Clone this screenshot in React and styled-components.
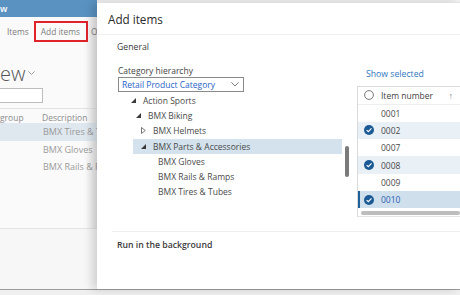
import React from "react";
import styled, { createGlobalStyle } from "styled-components";

const Global = createGlobalStyle`
  html, body { margin: 0; padding: 0; }
  body {
    width: 460px; height: 295px; overflow: hidden;
    background: #efefef;
    font-family: "Open Sans", "Noto Sans", sans-serif;
  }
  #root { width: 460px; height: 295px; }
`;

const Screen = styled.div`
  width: 460px; height: 295px;
  display: flex; flex-direction: column;
  background: #efefef;
`;

const Main = styled.div`
  height: 289px;
  display: grid;
  grid-template-columns: 97px 1fr;
  border-bottom: 1px solid #9c9c9c;
  background: #f4f4f4;
`;

/* ---------- back page ---------- */
const BackPage = styled.div`
  display: flex; flex-direction: column;
  background: linear-gradient(to right, #fafafa 0%, #fafafa 88%, #e9e9e9 100%);
  overflow: hidden;
  color: #8a8a8a;
`;

const TopBar = styled.div`
  height: 17px;
  background: #5a93c2;
  color: #fff;
  font-size: 9px; font-weight: 600;
  display: flex; align-items: center;
`;

const Tabs = styled.div`
  height: 28px;
  display: flex; align-items: center;
  font-size: 8.4px;
  color: #7d7d7d;
  white-space: nowrap;
`;

const Tab = styled.span`
  display: inline-flex; align-items: center;
  height: 21px;
  margin-left: ${p => p.$ml}px;
  padding: 0 ${p => (p.$boxed ? "6px 0 5px" : "0")};
  box-sizing: border-box;
  border: ${p => (p.$boxed ? "2px solid #e0232b" : "none")};
`;

const PageTitle = styled.div`
  margin-top: 17px;
  height: 22px;
  display: flex; align-items: center; gap: 3px;
  font-size: 20px; font-weight: 300;
  color: #555;
  white-space: nowrap;
`;

const FilterBox = styled.div`
  margin-top: 4px;
  margin-left: -2px;
  width: 45px; height: 15px;
  box-sizing: border-box;
  border: 1px solid #bdbdbd;
  background: #fff;
`;

const BackHeader = styled.div`
  margin-top: 5px;
  border-top: 1px solid #e3e3e3;
  height: 14px;
  display: grid; grid-template-columns: 42px 1fr;
  align-items: end;
  font-size: 8.5px;
  color: #8c8c8c;
  white-space: nowrap;
`;

const BackRow = styled.div`
  height: 17.5px;
  display: grid; grid-template-columns: 43px 1fr;
  align-items: center;
  font-size: 9px;
  color: #9a9a9a;
  white-space: nowrap;
  background: ${p => (p.$sel ? "#dfe7ef" : "transparent")};
`;

const BackFooter = styled.div`
  margin-top: auto;
  height: 60px;
  border-top: 1px solid #e4e4e4;
  background: #f7f7f7;
`;

/* ---------- dialog ---------- */
const DialogWrap = styled.div`
  padding-top: 2px;
  display: flex;
  background: #f2f2f2;
`;

const Dialog = styled.div`
  flex: 1;
  background: #fff;
  border-top: 1px solid #e1e1e1;
  box-shadow: -5px 0 9px rgba(0, 0, 0, 0.16);
  display: flex; flex-direction: column;
  overflow: hidden;
  color: #333;
`;

const DialogHeader = styled.div`
  height: 31px;
  border-bottom: 1px solid #f0f0f0;
  display: flex; align-items: center;
  padding-left: 11px;
  font-size: 11.7px;
  color: #2b2b2b;
`;

const Section = styled.div`
  padding-left: 20px;
  padding-top: ${p => p.$pt}px;
  height: 12px;
  line-height: 12px;
  font-size: 8.7px;
  font-weight: ${p => p.$w || 400};
  color: ${p => p.$c || "#333"};
  white-space: nowrap;
`;

const Body = styled.div`
  display: flex;
  padding-top: 13px;
  height: 153px;
`;

const LeftCol = styled.div`
  width: 260px;
  padding-left: 21px;
  box-sizing: border-box;
  display: flex; flex-direction: column;
`;

const Label = styled.div`
  font-size: 8.5px;
  color: #444;
  height: 10px;
  line-height: 10px;
  margin-bottom: 1px;
  white-space: nowrap;
`;

const Select = styled.div`
  width: 126px; height: 15px;
  box-sizing: border-box;
  border: 1px solid #8a8a8a;
  display: flex; align-items: center; justify-content: space-between;
  padding: 0 4px 0 3px;
  font-size: 8.5px;
  color: #2763c7;
  white-space: nowrap;
`;

const TreeArea = styled.div`
  margin-top: 1px;
  margin-left: 10px;
  display: flex;
  gap: 3px;
`;

const TreeRows = styled.div`
  width: 214px;
  display: flex; flex-direction: column;
`;

const TreeRow = styled.div`
  height: 15.2px;
  display: flex; align-items: center;
  padding-left: ${p => 3 + p.$level * 5 - (p.$sel ? 5 : 0)}px;
  margin-left: ${p => (p.$sel ? 5 : 0)}px;
  background: ${p => (p.$sel ? "#d3e2ec" : "transparent")};
  font-size: 8.5px;
  color: #4a4a4a;
  white-space: nowrap;
`;

const Twisty = styled.span`
  width: 12px;
  flex: none;
  display: inline-flex; align-items: center;
`;

const ScrollTrack = styled.div`
  width: 4px;
  display: flex; flex-direction: column;
`;

const ScrollThumb = styled.div`
  margin-top: 53px;
  height: 31px;
  border-radius: 2px;
  background: #7a7a7a;
`;

const RightCol = styled.div`
  flex: 1;
  display: flex; flex-direction: column;
`;

const LinkBtn = styled.div`
  padding-left: 9px;
  height: 12px;
  line-height: 12px;
  margin-top: 2px;
  font-size: 8.7px;
  color: #3176bd;
  white-space: nowrap;
`;

const Grid = styled.div`
  margin-top: 6px;
  border-left: 1px solid #dadada;
  border-top: 1px solid #dadada;
  border-bottom: 1px solid #e4e4e4;
  display: flex; flex-direction: column;
  height: 131px;
  box-sizing: border-box;
`;

const GridHead = styled.div`
  height: 16.5px;
  flex: none;
  display: flex; align-items: center;
  border-bottom: 1px solid #eeeeee;
  font-size: 8.5px;
  color: #444;
  white-space: nowrap;
  padding-left: 6px;
`;

const GridRow = styled.div`
  height: 17.3px;
  flex: none;
  display: flex; align-items: center;
  box-sizing: border-box;
  padding-left: ${p => (p.$current ? 4 : 6)}px;
  border-left: ${p => (p.$current ? "2px solid #1f5f9a" : "none")};
  background: ${p => (p.$current ? "#cfdfeb" : p.$sel ? "#e9f0f6" : "#fff")};
  font-size: 8.5px;
  color: ${p => (p.$current ? "#2a5eb3" : "#4a4a4a")};
  white-space: nowrap;
`;

const CheckCell = styled.span`
  width: 17px; flex: none;
  display: inline-flex; align-items: center;
`;

const HScroll = styled.div`
  margin: 3px 0 0 3px;
  height: 4px;
  flex: none;
  border-radius: 2px;
  background: #bdbdbd;
`;

const SortArrow = styled.span`
  margin-left: auto;
  margin-right: 7px;
  color: #8a8a8a;
  font-size: 9px;
  font-weight: 300;
`;

const Divider = styled.div`
  margin-left: 15px;
  margin-top: 12px;
  border-top: 1px solid #efefef;
`;

/* ---------- icons ---------- */
const Chevron = ({ color = "#555", size = 8 }) => (
  <svg width={size} height={size * 0.6} viewBox="0 0 10 6">
    <path d="M0.5 0.5 L5 5 L9.5 0.5" fill="none" stroke={color} strokeWidth="1" />
  </svg>
);

const Expanded = () => (
  <svg width="5" height="5" viewBox="0 0 5 5">
    <path d="M5 0 L5 5 L0 5 Z" fill="#3a3a3a" />
  </svg>
);

const Collapsed = () => (
  <svg width="5" height="7" viewBox="0 0 5 7">
    <path d="M0.5 0.5 L4.3 3.5 L0.5 6.5 Z" fill="none" stroke="#555" strokeWidth="0.8" />
  </svg>
);

const Checked = () => (
  <svg width="10" height="10" viewBox="0 0 10 10">
    <circle cx="5" cy="5" r="5" fill="#1b5a95" />
    <path d="M2.6 5.1 L4.3 6.7 L7.5 3.4" fill="none" stroke="#fff" strokeWidth="1.1" />
  </svg>
);

const Radio = () => (
  <svg width="10" height="10" viewBox="0 0 10 10">
    <circle cx="5" cy="5" r="4.4" fill="#fff" stroke="#6a6a6a" strokeWidth="0.9" />
  </svg>
);

const tree = [
  { label: "Action Sports", level: 0, icon: "exp" },
  { label: "BMX Biking", level: 1, icon: "exp" },
  { label: "BMX Helmets", level: 2, icon: "col" },
  { label: "BMX Parts & Accessories", level: 2, icon: "exp", sel: true },
  { label: "BMX Gloves", level: 3 },
  { label: "BMX Rails & Ramps", level: 3 },
  { label: "BMX Tires & Tubes", level: 3 },
];

const items = [
  { n: "0001" },
  { n: "0002", sel: true },
  { n: "0007" },
  { n: "0008", sel: true },
  { n: "0009" },
  { n: "0010", sel: true, current: true },
];

export default function App() {
  return (
    <Screen>
      <Global />
      <Main>
        <BackPage>
          <TopBar>w</TopBar>
          <Tabs>
            <Tab $ml={7}>Items</Tab>
            <Tab $ml={5} $boxed>Add items</Tab>
            <Tab $ml={3}>O</Tab>
          </Tabs>
          <PageTitle>
            ew <Chevron color="#777" size={7} />
          </PageTitle>
          <FilterBox />
          <BackHeader>
            <span>group</span>
            <span>Description</span>
          </BackHeader>
          <BackRow $sel><span /><span>BMX Tires &amp; Tubes</span></BackRow>
          <BackRow><span /><span>BMX Gloves</span></BackRow>
          <BackRow><span /><span>BMX Rails &amp; Ramps</span></BackRow>
          <BackFooter />
        </BackPage>

        <DialogWrap>
          <Dialog>
            <DialogHeader>Add items</DialogHeader>
            <Section $pt={6} $c="#3a3a3a">General</Section>
            <Body>
              <LeftCol>
                <Label>Category hierarchy</Label>
                <Select>
                  <span>Retail Product Category</span>
                  <Chevron color="#555" size={8} />
                </Select>
                <TreeArea>
                  <TreeRows>
                    {tree.map(t => (
                      <TreeRow key={t.label} $level={t.level} $sel={t.sel}>
                        <Twisty>
                          {t.icon === "exp" && <Expanded />}
                          {t.icon === "col" && <Collapsed />}
                        </Twisty>
                        {t.label}
                      </TreeRow>
                    ))}
                  </TreeRows>
                  <ScrollTrack>
                    <ScrollThumb />
                  </ScrollTrack>
                </TreeArea>
              </LeftCol>
              <RightCol>
                <LinkBtn>Show selected</LinkBtn>
                <Grid>
                  <GridHead>
                    <CheckCell><Radio /></CheckCell>
                    Item number
                    <SortArrow>↑</SortArrow>
                  </GridHead>
                  {items.map(it => (
                    <GridRow key={it.n} $sel={it.sel} $current={it.current}>
                      <CheckCell>{it.sel && <Checked />}</CheckCell>
                      {it.n}
                    </GridRow>
                  ))}
                  <HScroll />
                </Grid>
              </RightCol>
            </Body>
            <Divider />
            <Section $pt={7} $w={600} $c="#3a3a3a">Run in the background</Section>
          </Dialog>
        </DialogWrap>
      </Main>
    </Screen>
  );
}
